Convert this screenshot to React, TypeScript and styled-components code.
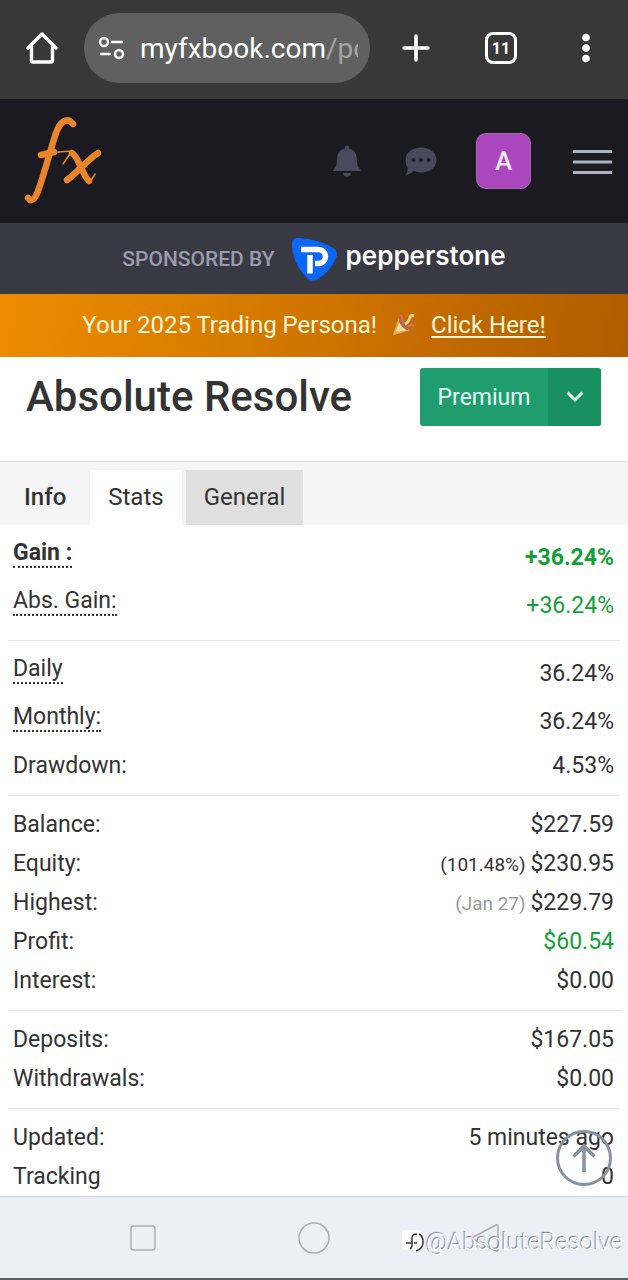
import React from "react";
import styled, { createGlobalStyle, css } from "styled-components";

const GlobalStyle = createGlobalStyle`
  *, *::before, *::after { box-sizing: border-box; }
  body {
    margin: 0;
    background: #ffffff;
    color: #333333;
    font-family: Roboto, "Liberation Sans", sans-serif;
    font-size: 23px;
  }
  button {
    border: 0;
    padding: 0;
    background: none;
    color: inherit;
    font: inherit;
    cursor: pointer;
  }
  svg { display: block; }
`;

const Page = styled.div`
  display: flex;
  flex-direction: column;
  min-height: 100vh;
`;

/* Browser toolbar */

const BrowserBar = styled.header`
  display: flex;
  align-items: center;
  justify-content: space-between;
  height: 99px;
  padding: 0 24px 3px;
  background: #383838;
  color: #ffffff;
`;

const AddressGroup = styled.div`
  display: flex;
  align-items: center;
  flex: 1;
  gap: 24px;
  min-width: 0;
`;

const ToolButton = styled.button`
  display: grid;
  place-items: center;
  width: 36px;
  height: 48px;
`;

const AddressPill = styled.div`
  display: flex;
  align-items: center;
  flex: 1;
  gap: 15px;
  height: 70px;
  min-width: 0;
  padding: 0 12px 0 13px;
  border-radius: 35px;
  background: #606060;
`;

const AddressText = styled.div`
  flex: 1;
  overflow: hidden;
  white-space: nowrap;
  font-size: 28px;
  line-height: 40px;
  padding-top: 2px;
`;

const AddressPath = styled.span`
  color: #a4a4a4;
`;

const BrowserActions = styled.div`
  display: flex;
  align-items: center;
  gap: 49px;
  margin-left: 28px;
`;

const TabCount = styled.span`
  display: grid;
  place-items: center;
  width: 32px;
  height: 32px;
  border: 3px solid #ffffff;
  border-radius: 8px;
  font-size: 16px;
  font-weight: 700;
`;

/* Site header */

const SiteHeader = styled.header`
  display: flex;
  align-items: center;
  justify-content: space-between;
  height: 124px;
  padding: 0 16px 0 24px;
  background: #1b1a20;
`;

const LogoLink = styled.a`
  display: block;
`;

const HeaderTools = styled.nav`
  display: flex;
  align-items: center;
  gap: 42px;
`;

const IconButton = styled.button`
  color: #4b4a5d;
`;

const Avatar = styled.button`
  display: grid;
  place-items: center;
  width: 55px;
  height: 56px;
  margin-left: -4px;
  border: 1px solid #a56bb0;
  border-radius: 10px;
  background: #ab47bc;
  color: #f6e4fa;
  font-size: 26px;
  font-weight: 500;
`;

const SponsorBar = styled.aside`
  display: flex;
  align-items: center;
  justify-content: center;
  gap: 16px;
  height: 71px;
  background: #393944;
`;

const SponsorLabel = styled.span`
  color: #9a9bab;
  font-size: 21px;
  font-weight: 500;
`;

const SponsorBrand = styled.a`
  display: flex;
  align-items: center;
  gap: 8px;
  color: #ffffff;
  text-decoration: none;
`;

const SponsorName = styled.span`
  padding-bottom: 5px;
  font-family: Inter, sans-serif;
  font-size: 26px;
  font-weight: 600;
  line-height: 32px;
`;

const PromoBar = styled.div`
  display: flex;
  align-items: center;
  justify-content: center;
  gap: 14px;
  height: 63px;
  padding-bottom: 2px;
  background: linear-gradient(100deg, #ee8d00, #b05c00);
  color: #fff6d8;
  font-size: 24px;
`;

const PromoLink = styled.a`
  color: inherit;
  text-decoration: underline;
  text-decoration-thickness: 2px;
  text-underline-offset: 3px;
`;

/* Account title and tabs */

const TitleBar = styled.div`
  display: flex;
  align-items: flex-start;
  justify-content: space-between;
  height: 104px;
  padding: 11px 27px 0 26px;
`;

const Title = styled.h1`
  margin: 0;
  font-size: 42px;
  font-weight: 500;
  line-height: 58px;
`;

const SplitButton = styled.div`
  display: flex;
  height: 58px;
  overflow: hidden;
  border-radius: 3px;
  background: #1f9d6f;
  color: #e4fff4;
`;

const PremiumButton = styled.button`
  width: 128px;
`;

const DropButton = styled.button`
  display: grid;
  place-items: center;
  width: 53px;
  background: #189061;
`;

const Tabs = styled.nav`
  display: flex;
  gap: 4px;
  height: 64px;
  padding-top: 8px;
  border-top: 1px solid #dddddd;
  background: #f5f5f6;
`;

const Tab = styled.button<{ $kind: "plain" | "open" | "shaded" }>`
  padding: 0 18px 2px;
  font-size: 24px;
  ${({ $kind }) =>
    $kind === "plain" &&
    css`
      padding-left: 24px;
      padding-right: 20px;
      font-weight: 500;
    `}
  ${({ $kind }) => $kind === "open" && css`background: #ffffff;`}
  ${({ $kind }) => $kind === "shaded" && css`background: #e0e0e0;`}
`;

/* Statistics */

const Stats = styled.main`
  flex: 1;
  padding: 0 8px;
`;

const Group = styled.dl`
  margin: 0;
  padding: 9px 6px 10px 5px;
  border-bottom: 1px solid #e8e8e8;
  &:last-of-type {
    padding-bottom: 0;
    border-bottom: 0;
  }
`;

const Row = styled.div<{ $tall?: boolean; $bold?: boolean }>`
  display: flex;
  justify-content: space-between;
  align-items: ${({ $tall }) => ($tall ? "flex-start" : "stretch")};
  height: ${({ $tall }) => ($tall ? 48 : 39)}px;
  line-height: ${({ $tall }) => ($tall ? 48 : 39)}px;
  font-weight: ${({ $bold }) => ($bold ? 700 : 400)};
`;

const Label = styled.dt<{ $hint?: boolean }>`
  ${({ $hint }) =>
    $hint &&
    css`
      margin-top: 6px;
      border-bottom: 2px dotted #333333;
      line-height: 26px;
    `}
`;

const Value = styled.dd<{ $gain?: boolean }>`
  margin: 0;
  color: ${({ $gain }) => ($gain ? "#14a038" : "inherit")};
`;

const Note = styled.small<{ $muted?: boolean }>`
  color: ${({ $muted }) => ($muted ? "#999999" : "inherit")};
  font-size: 19px;
`;

/* System navigation */

const SystemBar = styled.footer`
  position: relative;
  display: flex;
  align-items: center;
  justify-content: space-around;
  height: 84px;
  padding: 0 57px;
  border-top: 1px solid #ccd3dd;
  border-bottom: 2px solid #5a6068;
  background: #ecf0f6;
  color: #a9adb3;
`;

const ScrollTop = styled.button`
  position: absolute;
  right: 16px;
  bottom: 92px;
  color: #8593a1;
`;

const Watermark = styled.div`
  position: absolute;
  right: 5px;
  bottom: 20px;
  display: flex;
  align-items: center;
  gap: 2px;
  color: #ffffff;
  font-size: 24px;
  font-weight: 300;
  line-height: 32px;
  text-shadow: -1px -1px 1px #777777;
`;

type StatRow = {
  label: string;
  value: string;
  note?: string;
  mutedNote?: boolean;
  hint?: boolean;
  bold?: boolean;
  gain?: boolean;
};

const groups: StatRow[][] = [
  [
    { label: "Gain :", value: "+36.24%", hint: true, bold: true, gain: true },
    { label: "Abs. Gain:", value: "+36.24%", hint: true, gain: true },
  ],
  [
    { label: "Daily", value: "36.24%", hint: true },
    { label: "Monthly:", value: "36.24%", hint: true },
    { label: "Drawdown:", value: "4.53%" },
  ],
  [
    { label: "Balance:", value: "$227.59" },
    { label: "Equity:", value: "$230.95", note: "(101.48%)" },
    { label: "Highest:", value: "$229.79", note: "(Jan 27)", mutedNote: true },
    { label: "Profit:", value: "$60.54", gain: true },
    { label: "Interest:", value: "$0.00" },
  ],
  [
    { label: "Deposits:", value: "$167.05" },
    { label: "Withdrawals:", value: "$0.00" },
  ],
  [
    { label: "Updated:", value: "5 minutes ago" },
    { label: "Tracking", value: "0" },
  ],
];

const HomeIcon = () => (
  <svg width="34" height="34" viewBox="0 0 34 34" fill="none" stroke="#fff" strokeWidth="3.4" strokeLinejoin="round" strokeLinecap="round">
    <path d="M3 17 17 3l14 14M6.500 15v14.500q0 1.500 1.500 1.500h18q1.500 0 1.500-1.500V15" />
  </svg>
);

const SiteSettingsIcon = () => (
  <svg width="28" height="24" viewBox="0 0 28 24" fill="none" stroke="#fff" strokeWidth="2.400">
    <circle cx="7" cy="6" r="4" />
    <path d="M14 6h12M3 18h11" />
    <circle cx="22" cy="18" r="4" />
  </svg>
);

const FxLogo = () => (
  <svg width="80" height="92" viewBox="0 0 80 92" fill="none" stroke="#e8842a" strokeLinecap="round" strokeLinejoin="round">
    <path d="M49 9C43 1 36 7 32 18C26 36 20 60 14 76C11 85 7 87 4 83" strokeWidth="6.500" />
    <path d="M17 40L30 37" strokeWidth="6.500" />
    <path d="M28 37.500L48 36L39 49" strokeWidth="1.500" />
    <path d="M48 38C55 42 58 60 65 66" strokeWidth="6.500" />
    <path d="M43 65C53 58 63 45 74 38" strokeWidth="6.500" />
    <path d="M66 67L71 59" strokeWidth="1.500" />
  </svg>
);

const BellIcon = () => (
  <svg width="30" height="34" viewBox="0 0 30 34" fill="currentColor">
    <path d="M13.200 3a1.800 1.800 0 0 1 3.600 0v1.500c5 1 8 4.500 8 10 0 6 1 8 4 11.500v1H1.200v-1c3-3.500 4-5.500 4-11.500 0-5.500 3-9 8-10z" />
    <path d="M11 29h8a4 3.500 0 0 1-8 0z" />
  </svg>
);

const ChatIcon = () => (
  <svg width="34" height="30" viewBox="0 0 34 30">
    <path fill="currentColor" d="M17 1.500c9 0 15.500 5.500 15.500 12.500S26 26.500 17 26.500c-2.800 0-5-.5-7-1.400C7.500 27.500 4.500 28.800 1.500 28.800c1.500-2 2.500-4.500 2.300-7C2.300 19.500 1.500 17 1.500 14 1.500 7 8 1.500 17 1.500z" />
    <g fill="#1b1a20">
      <circle cx="9.500" cy="14" r="2" />
      <circle cx="17" cy="14" r="2" />
      <circle cx="24.500" cy="14" r="2" />
    </g>
  </svg>
);

const MenuIcon = () => (
  <svg width="39" height="26" viewBox="0 0 39 26" stroke="#a9b5c2" strokeWidth="3">
    <path d="M0 3.500h39M0 14h39M0 24.500h39" />
  </svg>
);

const PepperstoneIcon = () => (
  <svg width="47" height="44" viewBox="0 0 47 44">
    <path fill="#0b67f5" d="M1 7C1 1.500 4 .5 9 1c12 .8 23 4 33 10 4 2.500 5 6 3 10-4 9-10 16-18 21-4 2.500-8 2-11-1C6 31 1 19 1 7z" />
    <path fill="none" stroke="#fff" strokeWidth="5.500" d="M10 12.500H27.500a7 7 0 0 1 0 14H24M19 18v18.500" />
  </svg>
);

const PartyIcon = () => (
  <svg width="26" height="26" viewBox="0 0 28 26">
    <path fill="#e3ab58" d="M2 24 8 6q9 3 12 13z" />
    <path fill="#f5d9a0" d="M5 20 9 10l8 9z" />
    <ellipse cx="14" cy="12.500" rx="3" ry="7.500" fill="#b06a48" transform="rotate(-42 14 12.500)" />
    <path fill="none" stroke="#d9707a" strokeWidth="2" d="M12 10q2-4-2-8M18 15q4-3 7-1" />
    <path fill="none" stroke="#f0cf93" strokeWidth="3" d="M15 12q4-2 5-6t5-3" />
    <g fill="#c65b58">
      <circle cx="4" cy="3" r="1.500" />
      <circle cx="25" cy="9" r="1.300" />
      <circle cx="23" cy="21" r="1.500" />
    </g>
  </svg>
);

export default function App() {
  return (
    <>
      <GlobalStyle />
      <Page>
        <BrowserBar>
          <AddressGroup>
            <ToolButton aria-label="Home"><HomeIcon /></ToolButton>
            <AddressPill>
              <SiteSettingsIcon />
              <AddressText>myfxbook.com<AddressPath>/po</AddressPath></AddressText>
            </AddressPill>
          </AddressGroup>
          <BrowserActions>
            <ToolButton aria-label="New tab">
              <svg width="28" height="28" viewBox="0 0 28 28" stroke="#fff" strokeWidth="3.600" strokeLinecap="round">
                <path d="M14 2v24M2 14h24" />
              </svg>
            </ToolButton>
            <ToolButton aria-label="Open tabs"><TabCount>11</TabCount></ToolButton>
            <ToolButton aria-label="More">
              <svg width="8" height="30" viewBox="0 0 8 30" fill="#fff">
                <circle cx="4" cy="4.500" r="3.800" />
                <circle cx="4" cy="15" r="3.800" />
                <circle cx="4" cy="25.500" r="3.800" />
              </svg>
            </ToolButton>
          </BrowserActions>
        </BrowserBar>

        <SiteHeader>
          <LogoLink href="#" aria-label="Myfxbook"><FxLogo /></LogoLink>
          <HeaderTools>
            <IconButton aria-label="Notifications"><BellIcon /></IconButton>
            <IconButton aria-label="Messages"><ChatIcon /></IconButton>
            <Avatar>A</Avatar>
            <IconButton aria-label="Menu"><MenuIcon /></IconButton>
          </HeaderTools>
        </SiteHeader>

        <SponsorBar>
          <SponsorLabel>SPONSORED BY</SponsorLabel>
          <SponsorBrand href="#">
            <PepperstoneIcon />
            <SponsorName>pepperstone</SponsorName>
          </SponsorBrand>
        </SponsorBar>

        <PromoBar>
          Your 2025 Trading Persona! <PartyIcon />
          <PromoLink href="#">Click Here!</PromoLink>
        </PromoBar>

        <TitleBar>
          <Title>Absolute Resolve</Title>
          <SplitButton>
            <PremiumButton>Premium</PremiumButton>
            <DropButton aria-label="More options">
              <svg width="18" height="12" viewBox="0 0 18 12" fill="none" stroke="#e4fff4" strokeWidth="3">
                <path d="M1.500 1.500 9 9l7.500-7.500" />
              </svg>
            </DropButton>
          </SplitButton>
        </TitleBar>

        <Tabs>
          <Tab $kind="plain">Info</Tab>
          <Tab $kind="open">Stats</Tab>
          <Tab $kind="shaded">General</Tab>
        </Tabs>

        <Stats>
          {groups.map((rows, index) => (
            <Group key={index}>
              {rows.map((row) => (
                <Row key={row.label} $tall={row.hint} $bold={row.bold}>
                  <Label $hint={row.hint}>{row.label}</Label>
                  <Value $gain={row.gain}>
                    {row.note && <Note $muted={row.mutedNote}>{row.note} </Note>}
                    {row.value}
                  </Value>
                </Row>
              ))}
            </Group>
          ))}
        </Stats>

        <SystemBar>
          <ToolButton aria-label="Recent apps">
            <svg width="26" height="26" viewBox="0 0 26 26" fill="none" stroke="currentColor" strokeWidth="1.500">
              <rect x="1" y="1" width="24" height="24" rx="2.500" />
            </svg>
          </ToolButton>
          <ToolButton aria-label="Home screen">
            <svg width="32" height="32" viewBox="0 0 32 32" fill="none" stroke="currentColor" strokeWidth="1.500">
              <circle cx="16" cy="16" r="15" />
            </svg>
          </ToolButton>
          <ToolButton aria-label="Back">
            <svg width="28" height="32" viewBox="0 0 28 32" fill="none" stroke="currentColor" strokeWidth="1.500" strokeLinejoin="round">
              <path d="M25 3q2-1 2 1.500v23q0 2.500-2 1.500L3 17.500q-2-1.500 0-3z" />
            </svg>
          </ToolButton>
          <ScrollTop aria-label="Back to top">
            <svg width="56" height="56" viewBox="0 0 56 56" fill="none" stroke="currentColor" strokeWidth="3">
              <circle cx="28" cy="28" r="26.500" />
              <path d="M28 42V16M17.500 26.500 28 16l10.500 10.500" strokeWidth="3.500" />
            </svg>
          </ScrollTop>
          <Watermark>
            <svg width="22" height="24" viewBox="0 0 22 24">
              <rect x="0" y="0" width="20" height="20" rx="4" fill="#fff" />
              <path d="M4 13h5M12 13h3M8 19q2-1 2-4V8q0-4 5-4M17 4q4 2 4 8 0 7-7 9" fill="none" stroke="#333" strokeWidth="1.500" />
            </svg>
            @AbsoluteResolve
          </Watermark>
        </SystemBar>
      </Page>
    </>
  );
}
